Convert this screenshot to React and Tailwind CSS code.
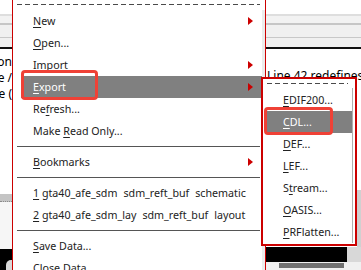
import React from "react";

function Arrow() {
  return (
    <svg width="5" height="8" viewBox="0 0 5 8" className="shrink-0">
      <path d="M0 0 L5 4 L0 8 Z" fill="#cc0000" />
    </svg>
  );
}

function M({ children }) {
  return <u className="underline decoration-1 underline-offset-[2px]">{children}</u>;
}

function Item({ children, arrow, active }) {
  return (
    <div
      className={
        active
          ? "shrink-0 h-[22px] ml-[8px] pl-[12px] pr-[9px] flex items-center justify-between bg-[#808080] text-white"
          : "shrink-0 h-[22px] ml-[8px] pl-[12px] pr-[9px] flex items-center justify-between text-[#222]"
      }
    >
      <span className="whitespace-pre">{children}</span>
      {arrow ? <Arrow /> : null}
    </div>
  );
}

function SubItem({ children, active }) {
  return (
    <div
      className={
        active
          ? "shrink-0 h-[22px] ml-[2px] pl-[18px] flex items-center bg-[#808080] text-white"
          : "shrink-0 h-[22px] ml-[2px] pl-[18px] flex items-center text-[#222]"
      }
    >
      <span className="whitespace-pre">{children}</span>
    </div>
  );
}

function Sep() {
  return (
    <div className="shrink-0 h-[9px] ml-[4px] mr-[2px] flex items-center">
      <div className="h-px w-full bg-[#555]" />
    </div>
  );
}

export default function App() {
  return (
    <div className="relative w-[361px] h-[270px] overflow-hidden bg-white font-['Noto_Sans',sans-serif] text-[10.7px]">
      {/* background window */}
      <div className="flex flex-col h-full">
        <div className="shrink-0 h-[14px] bg-white" />
        <div className="shrink-0 h-[2px] bg-[#dedede]" />
        <div className="shrink-0 h-[7px] bg-[#f2f2f2]" />
        <div className="shrink-0 h-[2px] bg-[#c6c6c6]" />
        <div className="shrink-0 h-[12px] bg-[#f0f0f0]" />
        <div className="shrink-0 h-px bg-[#c8c8c8]" />
        <div className="shrink-0 h-[9px] bg-[#f0f0f0]" />
        <div className="shrink-0 h-[2px] bg-[#111]" />
        <div className="flex flex-1">
          <div className="w-[12px] flex flex-col overflow-hidden">
            <div className="shrink-0 h-[145px] pt-[5px] text-[12px] leading-[16px] text-black">
              <div className="flex justify-end whitespace-nowrap">on</div>
              <div className="flex justify-end whitespace-nowrap">e /</div>
              <div className="flex justify-end whitespace-nowrap">e (</div>
            </div>
            <div className="shrink-0 h-[8px] bg-[#c4c4c4] border-b border-dotted border-[#8a8a8a]" />
            <div className="shrink-0 h-[47px] bg-[#f6f6f6]" />
            <div className="flex-1 bg-black pt-[11px] pl-[6px]">
              <div className="w-[10px] h-[16px] rounded-full bg-[#d8d8d8]" />
            </div>
          </div>
          <div className="flex-1" />
          <div className="w-[95px] flex flex-col">
            <div className="shrink-0 h-[141px] pt-[6px] pl-[1px] text-[12px] leading-[14px] text-black whitespace-nowrap overflow-hidden">
              <div className="h-[14px]" />
              <div>Line 42 redefines</div>
            </div>
            <div className="shrink-0 h-[57px] flex">
              <div className="flex-1 bg-white" />
              <div className="w-[4px] bg-[#d0d0d0]" />
            </div>
            <div className="shrink-0 h-[15px] flex">
              <div className="w-[81px] bg-black" />
              <div className="flex-1 bg-[#d8d8d8]" />
            </div>
            <div className="flex-1 bg-[#f0f0f0] pl-[13px] pt-px">
              <div className="w-[65px] h-[5px] bg-[#707070]" />
            </div>
          </div>
        </div>
      </div>

      {/* main menu */}
      <div className="absolute left-[12px] top-0 w-[254px] h-[270px] bg-white border-x border-[#cc0000] flex">
        <div className="flex-1 flex flex-col pt-[4px]">
          <div className="shrink-0 ml-[4px] mr-[2px] h-px bg-[repeating-linear-gradient(90deg,#4a4a4a_0_5px,transparent_5px_8px)]" />
          <div className="shrink-0 h-[5px]" />
          <Item arrow>
            <M>N</M>ew
          </Item>
          <Item>
            <M>O</M>pen...
          </Item>
          <Item arrow>Import</Item>
          <Item arrow active>
            <M>E</M>xport
          </Item>
          <Item>
            Re<M>f</M>resh...
          </Item>
          <Item>
            Make <M>R</M>ead Only...
          </Item>
          <Sep />
          <Item arrow>
            <M>B</M>ookmarks
          </Item>
          <Sep />
          <Item>
            <M>1</M> gta40_afe_sdm<span className="ml-[6px]">sdm_reft_buf</span>
            <span className="ml-[6px]">schematic</span>
          </Item>
          <Item>
            <M>2</M> gta40_afe_sdm_lay<span className="ml-[6px]">sdm_reft_buf</span>
            <span className="ml-[6px]">layout</span>
          </Item>
          <Sep />
          <Item>
            <M>S</M>ave Data...
          </Item>
          <Item>
            <M>C</M>lose Data
          </Item>
        </div>
        <div className="w-[3px] mt-[10px] bg-[#ececec]" />
      </div>

      {/* submenu */}
      <div className="absolute left-[261px] top-[77px] w-[96px] h-[169px] bg-white border-2 border-[#cc0000] flex">
        <div className="w-[89px] flex flex-col pt-[4px]">
          <div className="shrink-0 ml-[4px] mr-[4px] h-px bg-[repeating-linear-gradient(90deg,#4a4a4a_0_5px,transparent_5px_8px)]" />
          <div className="shrink-0 h-[5px]" />
          <SubItem>
            <M>E</M>DIF200...
          </SubItem>
          <SubItem active>
            <M>C</M>DL...
          </SubItem>
          <SubItem>
            <M>D</M>EF...
          </SubItem>
          <SubItem>
            <M>L</M>EF...
          </SubItem>
          <SubItem>
            S<M>t</M>ream...
          </SubItem>
          <SubItem>
            <M>O</M>ASIS...
          </SubItem>
          <SubItem>
            <M>P</M>RFlatten...
          </SubItem>
        </div>
        <div className="w-px mt-[9px] mb-px bg-[#b0b0b0]" />
      </div>

      {/* annotation boxes */}
      <div className="absolute left-[21px] top-[70px] w-[77px] h-[30px] border-[3px] border-[#ef4136] rounded-[4px]" />
      <div className="absolute left-[264px] top-[107px] w-[69px] h-[28px] border-[3px] border-[#ef4136] rounded-[4px]" />
    </div>
  );
}
